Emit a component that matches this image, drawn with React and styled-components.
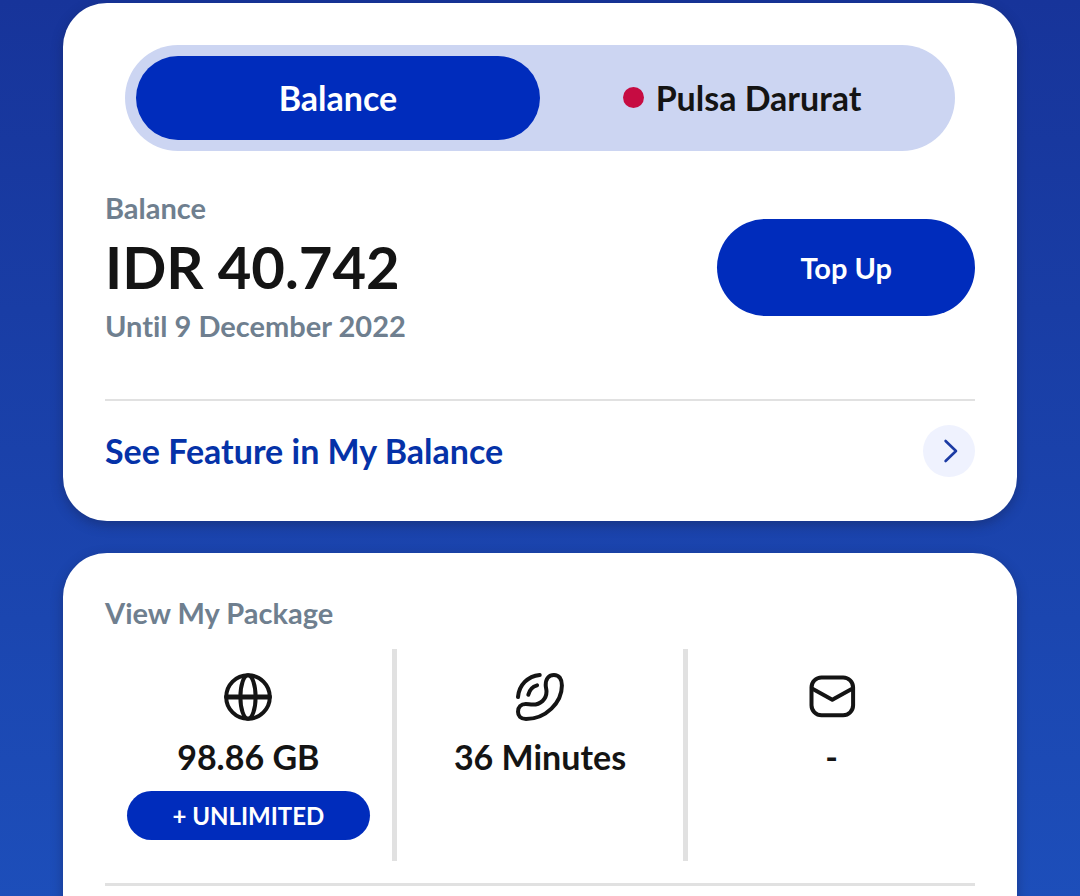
import React from "react";
import styled, { createGlobalStyle } from "styled-components";

const GlobalStyle = createGlobalStyle`
  * {
    box-sizing: border-box;
  }
  body {
    margin: 0;
  }
  button {
    border: 0;
    padding: 0;
    font: inherit;
    cursor: pointer;
  }
`;

const StyledPage = styled.main`
  display: flex;
  flex-direction: column;
  gap: 32px;
  min-height: 100vh;
  padding: 3px 63px 0;
  font-family: "Lato", "Open Sans", sans-serif;
  font-weight: 700;
  font-variant-ligatures: none;
  color: #141414;
  background: linear-gradient(#17349a, #1d4fbb);
`;

const StyledCard = styled.section`
  padding: 42px 42px 44px;
  border-radius: ${(props) => (props.$open ? "44px 44px 0 0" : "44px")};
  flex-grow: ${(props) => (props.$open ? 1 : 0)};
  background: #fff;
  box-shadow: 0 4px 12px rgba(20, 30, 70, 0.4);
`;

const StyledTabs = styled.div`
  display: flex;
  margin: 0 20px 39px;
  padding: 11px;
  border-radius: 53px;
  background: #ccd5f2;
`;

const StyledTab = styled.button`
  display: flex;
  flex: 1;
  align-items: center;
  justify-content: center;
  gap: 12px;
  height: 84px;
  padding-bottom: 2px;
  border-radius: 42px;
  font-size: 34px;
  color: ${(props) => (props.$active ? "#fff" : "#141414")};
  background: ${(props) => (props.$active ? "#002cbc" : "transparent")};
`;

const StyledDot = styled.span`
  width: 21px;
  height: 21px;
  border-radius: 50%;
  background: #c60c42;
`;

const StyledBalanceRow = styled.div`
  display: flex;
  align-items: center;
  justify-content: space-between;
  margin-bottom: 55px;
`;

const StyledCaption = styled.p`
  margin: 0;
  font-size: 29px;
  line-height: 36px;
  color: #6f7f8f;
`;

const StyledAmount = styled.p`
  margin: 0;
  font-size: 58px;
  line-height: 82px;
`;

const StyledTopUp = styled.button`
  padding: 0 83px;
  height: 97px;
  border-radius: 49px;
  font-size: 29px;
  color: #fff;
  background: #002cbc;
`;

const StyledRule = styled.hr`
  height: ${(props) => (props.$thick ? "3px" : "2px")};
  margin: 0;
  border: 0;
  background: #e1e1e1;
`;

const StyledFeatureLink = styled.a`
  display: flex;
  align-items: center;
  justify-content: space-between;
  margin-top: 24px;
  font-size: 34px;
  line-height: 44px;
  text-decoration: none;
  color: #0532a8;
`;

const StyledPackages = styled.div`
  display: grid;
  grid-template-columns: 1fr auto 1fr auto 1fr;
  margin: 18px 0 22px;
`;

const StyledDivider = styled.div`
  width: 5px;
  background: #e1e1e1;
`;

const StyledPackage = styled.div`
  display: flex;
  flex-direction: column;
  align-items: center;
  padding: 24px 0 21px;
`;

const StyledQuota = styled.span`
  margin: 14px 0 12px;
  font-size: 34px;
  line-height: 44px;
`;

const StyledUnlimited = styled.button`
  align-self: stretch;
  height: 49px;
  margin: 0 22px;
  border-radius: 25px;
  font-size: 24px;
  color: #fff;
  background: #002cbc;
`;

const Icon = ({ viewBox, children }) => (
  <svg
    width="48"
    height="48"
    viewBox={viewBox}
    fill="none"
    stroke="#141414"
    strokeWidth="4"
    strokeLinecap="round"
    strokeLinejoin="round"
    aria-hidden="true"
  >
    {children}
  </svg>
);

const GlobeIcon = () => (
  <Icon viewBox="0 0 48 48">
    <circle cx="24" cy="24" r="21.8" />
    <ellipse cx="24" cy="24" rx="7.6" ry="21.8" />
    <path d="M2.5 24h43" strokeWidth="4.8" />
  </Icon>
);

const PhoneIcon = () => (
  <Icon viewBox="15.5 13 48 48">
    <path d="M45.2 25C45.2 18.5 48.7 15 53.4 15C58.6 15 61.4 19 61.4 25.5C61.4 42.5 45.5 59 25.5 59C20 59 17.5 55.8 17.5 51.7C17.5 47 20.3 44 25.3 44C27.7 44 29.5 44.6 32.3 44.6C40 44.6 46 39.2 46 31.5C46 29.2 45.2 27.3 45.2 25Z" />
    <path d="M17.5 37C18.5 25 27.2 16.2 39.2 15" />
    <path d="M27.8 34.7C28.9 30 32 26.6 36.6 25.3" />
  </Icon>
);

const MailIcon = () => (
  <Icon viewBox="16.5 13 48 48">
    <rect x="20" y="17.5" width="41.6" height="37.8" rx="10" />
    <path d="M20.5 28.5L40.8 39.8L61.1 28.5" />
  </Icon>
);

const ArrowIcon = () => (
  <svg width="52" height="52" viewBox="0 0 52 52" fill="none" aria-hidden="true">
    <circle cx="26" cy="26" r="26" fill="#eff2fe" />
    <path
      d="M22.6 16L33 26L22.6 36"
      stroke="#1c3ba4"
      strokeWidth="2.6"
      strokeLinecap="round"
      strokeLinejoin="round"
    />
  </svg>
);

function App() {
  return (
    <StyledPage>
      <GlobalStyle />
      <StyledCard>
        <StyledTabs>
          <StyledTab type="button" $active>
            Balance
          </StyledTab>
          <StyledTab type="button">
            <StyledDot />
            Pulsa Darurat
          </StyledTab>
        </StyledTabs>
        <StyledBalanceRow>
          <div>
            <StyledCaption>Balance</StyledCaption>
            <StyledAmount>IDR 40.742</StyledAmount>
            <StyledCaption>Until 9 December 2022</StyledCaption>
          </div>
          <StyledTopUp type="button">Top Up</StyledTopUp>
        </StyledBalanceRow>
        <StyledRule />
        <StyledFeatureLink href="#balance">
          See Feature in My Balance
          <ArrowIcon />
        </StyledFeatureLink>
      </StyledCard>
      <StyledCard $open>
        <StyledCaption>View My Package</StyledCaption>
        <StyledPackages>
          <StyledPackage>
            <GlobeIcon />
            <StyledQuota>98.86 GB</StyledQuota>
            <StyledUnlimited type="button">+ UNLIMITED</StyledUnlimited>
          </StyledPackage>
          <StyledDivider />
          <StyledPackage>
            <PhoneIcon />
            <StyledQuota>36 Minutes</StyledQuota>
          </StyledPackage>
          <StyledDivider />
          <StyledPackage>
            <MailIcon />
            <StyledQuota>-</StyledQuota>
          </StyledPackage>
        </StyledPackages>
        <StyledRule $thick />
      </StyledCard>
    </StyledPage>
  );
}

export default App;
